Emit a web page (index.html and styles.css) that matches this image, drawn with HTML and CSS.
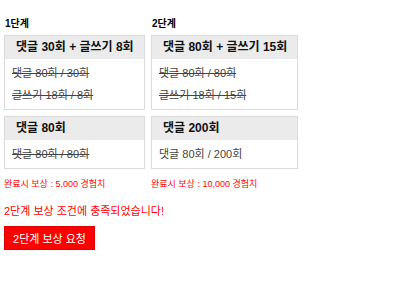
FILE: index.html
```html
<!doctype html>
<html lang="ko">
<head>
    <meta charset="UTF-8">
    <title>보상</title>
    <link rel="stylesheet" href="styles.css">
</head>
<body>
<div class="wrap">
    <div class="steps">
        <div class="col col1">
            <h3 class="tit">1단계</h3>
            <div class="box">
                <div class="head">댓글 30회 + 글쓰기 8회</div>
                <ul class="body">
                    <li class="done">댓글 80회 / 30회</li>
                    <li class="done">글쓰기 18회 / 8회</li>
                </ul>
            </div>
            <div class="box">
                <div class="head">댓글 80회</div>
                <ul class="body">
                    <li class="done">댓글 80회 / 80회</li>
                </ul>
            </div>
            <p class="reward">완료시 보상 : 5,000 경험치</p>
        </div>
        <div class="col col2">
            <h3 class="tit">2단계</h3>
            <div class="box">
                <div class="head">댓글 80회 + 글쓰기 15회</div>
                <ul class="body">
                    <li class="done">댓글 80회 / 80회</li>
                    <li class="done">글쓰기 18회 / 15회</li>
                </ul>
            </div>
            <div class="box">
                <div class="head">댓글 200회</div>
                <ul class="body">
                    <li>댓글 80회 / 200회</li>
                </ul>
            </div>
            <p class="reward">완료시 보상 : 10,000 경험치</p>
        </div>
    </div>
    <p class="msg">2단계 보상 조건에 충족되었습니다!</p>
    <button class="btn" type="button">2단계 보상 요청</button>
</div>
</body>
</html>
```

FILE: styles.css
```css
* {
    padding: 0;
    margin: 0;
    list-style: none;
    border: 0;
}

body {
    font-family: "Liberation Sans", "Noto Sans CJK KR", sans-serif;
    color: #000;
    background: #fff;
}

.wrap {
    padding: 17px 4px;
}

.steps {
    display: flex;
    gap: 6px;
}

.col {
    display: flex;
    flex-direction: column;
    gap: 6px;
}

.col1 {
    width: 141px;
}

.col2 {
    width: 147px;
}

.tit {
    font-size: 10px;
    line-height: 14px;
    font-weight: bold;
    margin-bottom: -2px;
    padding-left: 1px;
}

.box {
    border: 1px solid #dcdcdc;
    box-shadow: 0 0 1px #eee;
}

.box .head {
    height: 23px;
    line-height: 23px;
    background: #ebebeb;
    padding-left: 11px;
    font-size: 12px;
    font-weight: bold;
    color: #111;
    white-space: nowrap;
}

.box .body {
    padding: 3px 7px;
}

.box .body li {
    line-height: 22px;
    font-size: 11px;
    color: #444;
    white-space: nowrap;
}

.box .body li.done {
    text-decoration: line-through;
}

.reward {
    margin-top: 2px;
    font-size: 9px;
    line-height: 14px;
    color: #f00;
    white-space: nowrap;
}

.msg {
    margin-top: 12px;
    font-size: 11px;
    line-height: 16px;
    color: #f00;
}

.btn {
    margin-top: 7px;
    width: 91px;
    height: 24px;
    background: #f00;
    border: 1px solid #d00;
    color: #fff;
    font-family: "Liberation Sans", "Noto Sans CJK KR", sans-serif;
    font-size: 11px;
    cursor: pointer;
}
```
